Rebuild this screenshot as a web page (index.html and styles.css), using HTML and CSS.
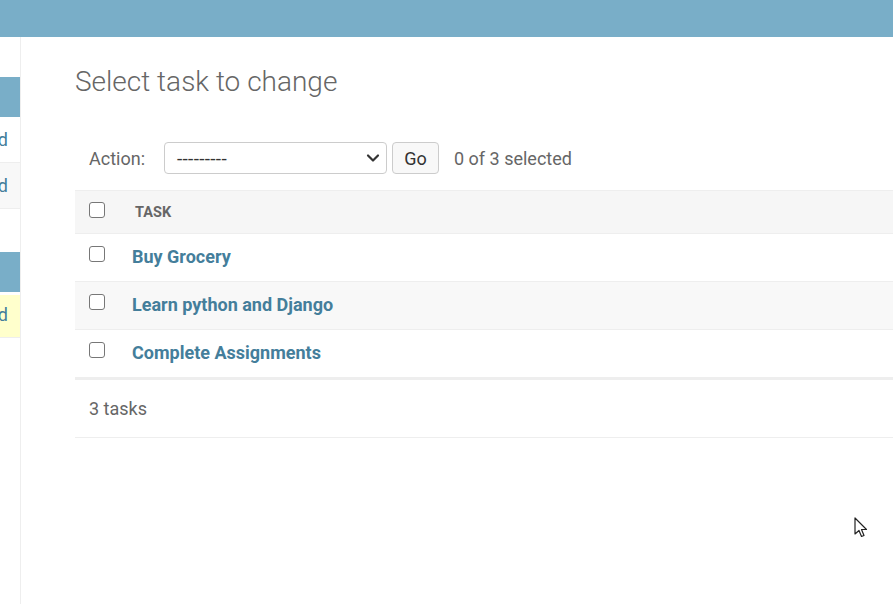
FILE: index.html
```html
<!DOCTYPE html>
<html lang="en">
<head>
<meta charset="utf-8">
<title>Select task to change</title>
<link rel="stylesheet" href="styles.css">
</head>
<body>
<header class="topbar"></header>
<div class="main">
  <nav class="sidebar">
    <div class="gap-top"></div>
    <div class="caption"></div>
    <div class="side-row"><span>Add</span></div>
    <div class="side-row alt"><span>Add</span></div>
    <div class="side-gap"></div>
    <div class="caption"></div>
    <div class="side-row current"><span>Add</span></div>
  </nav>
  <section class="content">
    <h1 class="title">Select task to change</h1>
    <div class="actions">
      <label class="action-label">Action:</label>
      <div class="select">
        <span>---------</span>
        <svg class="chevron" width="14" height="10" viewBox="0 0 14 10"><path d="M2 2.5 L7 7.5 L12 2.5" fill="none" stroke="#333" stroke-width="2.2" stroke-linecap="round" stroke-linejoin="round"/></svg>
      </div>
      <button class="go">Go</button>
      <span class="counter">0 of 3 selected</span>
    </div>
    <div class="results">
      <div class="row head">
        <span class="cb"></span>
        <span class="col-title">TASK</span>
      </div>
      <div class="row">
        <span class="cb"></span>
        <a class="link">Buy Grocery</a>
      </div>
      <div class="row alt">
        <span class="cb"></span>
        <a class="link">Learn python and Django</a>
      </div>
      <div class="row">
        <span class="cb"></span>
        <a class="link">Complete Assignments</a>
      </div>
    </div>
    <div class="paginator">3 tasks</div>
  </section>
</div>
<svg class="cursor" width="14" height="22" viewBox="0 0 14 22"><path d="M1 1 L1 17 L5 13.5 L7.5 19.5 L10 18.5 L7.5 12.5 L12.5 12.5 Z" fill="#fff" stroke="#222" stroke-width="1.2" stroke-linejoin="round"/></svg>
</body>
</html>
```

FILE: styles.css
```css
* { box-sizing: border-box; }
html, body { margin: 0; padding: 0; }
body {
  width: 893px;
  height: 604px;
  overflow: hidden;
  background: #fff;
  font-family: Roboto, "Liberation Sans", sans-serif;
  color: #666;
  position: relative;
}
.topbar {
  height: 37px;
  background: #79aec8;
}
.main {
  display: flex;
  height: 567px;
}
.sidebar {
  width: 21px;
  flex: none;
  border-right: 1px solid #eee;
  display: flex;
  flex-direction: column;
}
.gap-top { height: 40px; }
.caption {
  height: 40px;
  background: #79aec8;
}
.side-row {
  height: 46px;
  display: flex;
  align-items: center;
  justify-content: flex-end;
  padding-right: 12px;
  overflow: hidden;
  white-space: nowrap;
  border-bottom: 1px solid #eee;
  color: #447e9b;
  font-size: 18px;
}
.side-row.alt { background: #f8f8f8; }
.side-row.current { background: #ffffcc; height: 43px; margin-top: 3px; padding-bottom: 4px; }
.side-gap { height: 43px; }
.content {
  flex: 1;
  min-width: 0;
  padding: 28px 0 0 54px;
  overflow: hidden;
}
.title {
  margin: 0;
  font-size: 28px;
  font-weight: 300;
  line-height: 34px;
  color: #666;
}
.actions {
  display: flex;
  align-items: center;
  margin-top: 42px;
  height: 34px;
  padding-left: 14px;
  font-size: 18px;
}
.action-label { margin-right: 19px; }
.select {
  width: 223px;
  height: 32px;
  border: 1px solid #ccc;
  border-radius: 4px;
  display: flex;
  align-items: center;
  justify-content: space-between;
  padding: 0 6px 0 12px;
  color: #333;
  font-size: 19px;
  margin-right: 5px;
}
.select span { letter-spacing: 0.3px; }
.go {
  width: 47px;
  height: 32px;
  border: 1px solid #ccc;
  border-radius: 4px;
  background: #f8f8f8;
  font-family: inherit;
  font-size: 18px;
  color: #333;
  padding: 0;
  margin-right: 15px;
}
.counter { color: #666; }
.results {
  margin-top: 15px;
  width: 1000px;
}
.row {
  display: flex;
  align-items: center;
  height: 48px;
  border-bottom: 1px solid #eee;
  padding-left: 14px;
}
.row.alt { background: #f8f8f8; }
.row.head {
  height: 44px;
  background: #f6f6f6;
  border-top: 1px solid #eee;
  border-bottom: 1px solid #eee;
}
.cb {
  width: 16px;
  height: 16px;
  border: 1.5px solid #777;
  border-radius: 3px;
  background: #fff;
  margin-right: 27px;
  margin-top: -7px;
}
.row .cb { margin-top: -7px; }
.row.head .cb { margin-top: -5px; margin-right: 30px; }
.col-title {
  font-size: 14.5px;
  font-weight: 700;
  color: #666;
}
.link {
  font-size: 18px;
  font-weight: 700;
  color: #447e9b;
  margin-top: -3px;
}
.paginator {
  width: 1000px;
  height: 60px;
  border-top: 2px solid #eee;
  border-bottom: 1px solid #eee;
  display: flex;
  align-items: center;
  padding-left: 14px;
  font-size: 18px;
  color: #666;
}
.cursor {
  position: absolute;
  left: 854px;
  top: 517px;
}
```
